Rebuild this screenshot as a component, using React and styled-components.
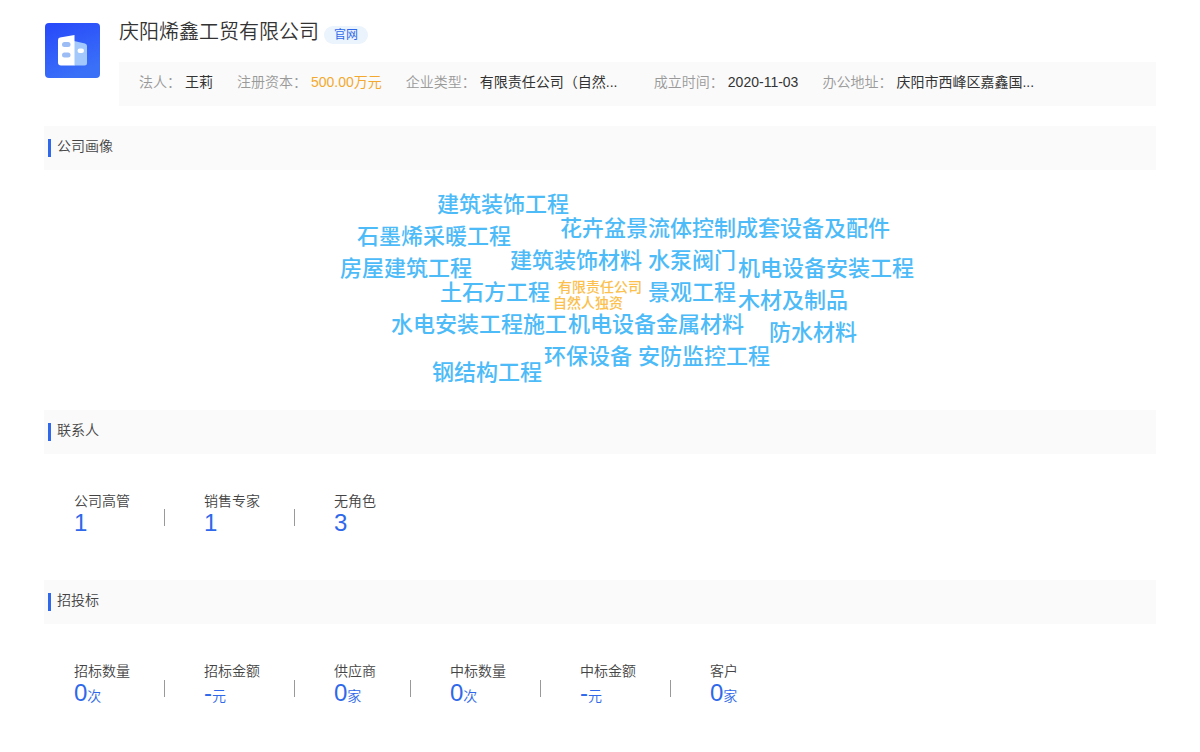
import React from 'react'
import styled, { createGlobalStyle } from 'styled-components'

const COLORS = {
  BLUE: '#2f68ea',
  ORANGE: '#f3a92f',
  SKY: '#4dbbf8',
  AMBER: '#fbc04d',
  TEXT: '#333333',
  TITLE: '#444444',
  MUTED: '#999999',
  PANEL: '#fafafa',
}

const GlobalStyle = createGlobalStyle`
  body {
    margin: 0;
    background: #ffffff;
    color: ${COLORS.TEXT};
    font-family: 'Liberation Sans', 'Noto Sans CJK SC', sans-serif;
    font-size: 14px;
    line-height: 20px;
  }
`

const FACTS = [
  { label: '法人', value: '王莉' },
  { label: '注册资本', value: '500.00万元', highlight: true },
  { label: '企业类型', value: '有限责任公司（自然...', wide: true },
  { label: '成立时间', value: '2020-11-03' },
  { label: '办公地址', value: '庆阳市西峰区嘉鑫国...', wide: true },
]

// x is measured from the middle of the cloud, y from its top
const WORDS = [
  { text: '建筑装饰工程', x: -163, y: 19 },
  { text: '花卉盆景', x: -40, y: 43 },
  { text: '流体控制成套设备及配件', x: 48, y: 43 },
  { text: '石墨烯采暖工程', x: -243, y: 51 },
  { text: '建筑装饰材料', x: -90, y: 75 },
  { text: '水泵阀门', x: 48, y: 75 },
  { text: '房屋建筑工程', x: -260, y: 83 },
  { text: '机电设备安装工程', x: 138, y: 83 },
  { text: '土石方工程', x: -160, y: 107 },
  { text: '有限责任公司', x: -42, y: 107, small: true },
  { text: '自然人独资', x: -47, y: 123, small: true },
  { text: '景观工程', x: 48, y: 107 },
  { text: '木材及制品', x: 138, y: 115 },
  { text: '水电安装工程', x: -209, y: 139 },
  { text: '施工', x: -77, y: 139 },
  { text: '机电设备', x: -32, y: 139 },
  { text: '金属材料', x: 56, y: 139 },
  { text: '防水材料', x: 169, y: 147 },
  { text: '环保设备', x: -56, y: 171 },
  { text: '安防监控工程', x: 38, y: 171 },
  { text: '钢结构工程', x: -168, y: 187 },
]

const CONTACTS = [
  { label: '公司高管', value: '1' },
  { label: '销售专家', value: '1' },
  { label: '无角色', value: '3' },
]

const BIDS = [
  { label: '招标数量', value: '0', unit: '次' },
  { label: '招标金额', value: '-', unit: '元' },
  { label: '供应商', value: '0', unit: '家' },
  { label: '中标数量', value: '0', unit: '次' },
  { label: '中标金额', value: '-', unit: '元' },
  { label: '客户', value: '0', unit: '家' },
]

const Logo = () => (
  <LogoSvg viewBox='0 0 55 55' aria-hidden='true'>
    <defs>
      <linearGradient id='logo-bg' x1='0' y1='0' x2='0.4' y2='1'>
        <stop offset='0' stopColor='#2748fa' />
        <stop offset='1' stopColor='#3a70f8' />
      </linearGradient>
    </defs>
    <rect width='55' height='55' rx='4' fill='url(#logo-bg)' />
    <path d='M29 18 L40 20.5 Q42 21 42 23 V40 Q42 42.500 39.500 42.500 H29 Z' fill='#a3c8fb' />
    <path d='M29.500 12 V42.500 H16 Q13 42.500 13 39.500 V17 Q13 15 15 14.600 Z' fill='#ffffff' />
    <rect x='17' y='19' width='8.500' height='5' rx='2.500' fill='#9bbcf5' />
    <rect x='17' y='29.500' width='8.500' height='5' rx='2.500' fill='#9bbcf5' />
    <rect x='32.500' y='25.500' width='6.500' height='4.500' rx='2.200' fill='#ffffff' />
  </LogoSvg>
)

const StatList = ({ items }) => (
  <Stats>
    {items.map(({ label, value, unit }) => (
      <Stat key={label}>
        <StatLabel>{label}</StatLabel>
        <StatValue>
          {value}
          {unit && <Unit>{unit}</Unit>}
        </StatValue>
      </Stat>
    ))}
  </Stats>
)

const App = () => (
  <>
    <GlobalStyle />
    <Page>
      <Header>
        <Logo />
        <HeaderBody>
          <TitleRow>
            <CompanyName>庆阳烯鑫工贸有限公司</CompanyName>
            <SiteLink href='#'>官网</SiteLink>
          </TitleRow>
          <Facts>
            {FACTS.map(({ label, value, highlight, wide }) => (
              <Fact key={label}>
                <FactLabel>{label}：</FactLabel>
                <FactValue $highlight={highlight} $wide={wide}>{value}</FactValue>
              </Fact>
            ))}
          </Facts>
        </HeaderBody>
      </Header>
      <section>
        <SectionTitle>公司画像</SectionTitle>
        <Cloud>
          {WORDS.map(({ text, x, y, small }) => (
            <Word key={text} $small={small} style={{ left: `calc(50% + ${x}px)`, top: y }}>
              {text}
            </Word>
          ))}
        </Cloud>
      </section>
      <section>
        <SectionTitle>联系人</SectionTitle>
        <StatList items={CONTACTS} />
      </section>
      <section>
        <SectionTitle>招投标</SectionTitle>
        <StatList items={BIDS} />
      </section>
    </Page>
  </>
)

const Page = styled.main`
  padding: 16px 44px 0;
`

const Header = styled.header`
  display: flex;
  gap: 19px;
  padding-left: 1px;
  margin-bottom: 20px;
`

const LogoSvg = styled.svg`
  flex: none;
  width: 55px;
  height: 55px;
  margin-top: 7px;
`

const HeaderBody = styled.div`
  flex: 1;
  min-width: 0;
`

const TitleRow = styled.div`
  display: flex;
  align-items: center;
  gap: 5px;
  height: 32px;
  margin-bottom: 14px;
`

const CompanyName = styled.h1`
  margin: 0;
  color: ${COLORS.TEXT};
  font-size: 20px;
  font-weight: 350;
  line-height: 30px;
`

const SiteLink = styled.a`
  margin-top: 6px;
  padding: 0 10px;
  border-radius: 9px;
  background: #ebf3fd;
  color: ${COLORS.BLUE};
  font-size: 12px;
  line-height: 18px;
  text-decoration: none;
`

const Facts = styled.dl`
  display: flex;
  gap: 24px;
  margin: 0;
  padding: 10px 20px 14px;
  background: ${COLORS.PANEL};
`

const Fact = styled.div`
  display: flex;
  gap: 4px;
`

const FactLabel = styled.dt`
  color: ${COLORS.MUTED};
  font-weight: 350;
  white-space: nowrap;
`

const FactValue = styled.dd`
  min-width: ${({ $wide }) => ($wide ? '150px' : 'auto')};
  margin: 0;
  color: ${({ $highlight }) => ($highlight ? COLORS.ORANGE : COLORS.TEXT)};
  white-space: nowrap;
`

const SectionTitle = styled.h2`
  display: flex;
  gap: 6px;
  margin: 0;
  padding: 10px 4px 13px;
  background: ${COLORS.PANEL};
  color: ${COLORS.TITLE};
  font-size: 14px;
  font-weight: 350;
  line-height: 20px;

  &::before {
    content: '';
    width: 3px;
    height: 18px;
    margin-top: 3px;
    background: ${COLORS.BLUE};
  }
`

const Cloud = styled.div`
  position: relative;
  height: 240px;
`

const Word = styled.span`
  position: absolute;
  color: ${({ $small }) => ($small ? COLORS.AMBER : COLORS.SKY)};
  font-size: ${({ $small }) => ($small ? '14px' : '22px')};
  font-weight: 500;
  line-height: ${({ $small }) => ($small ? '20px' : '32px')};
  white-space: nowrap;
`

const Stats = styled.dl`
  display: flex;
  margin: 0;
  padding: 37px 30px 45px;
`

const Stat = styled.div`
  display: grid;
  grid-template-columns: auto auto;
  column-gap: 34px;
  padding-right: 39px;

  &:not(:last-child)::after {
    content: '';
    grid-row: 1 / 3;
    grid-column: 2;
    align-self: center;
    width: 1px;
    height: 17px;
    margin-top: 8px;
    background: #999999;
  }
`

const StatLabel = styled.dt`
  grid-column: 1;
  color: ${COLORS.TITLE};
  font-weight: 350;
  line-height: 20px;
`

const StatValue = styled.dd`
  grid-column: 1;
  margin: 0;
  color: ${COLORS.BLUE};
  font-size: 24px;
  line-height: 24px;
`

const Unit = styled.span`
  font-size: 14px;
  font-weight: 350;
`

export default App
